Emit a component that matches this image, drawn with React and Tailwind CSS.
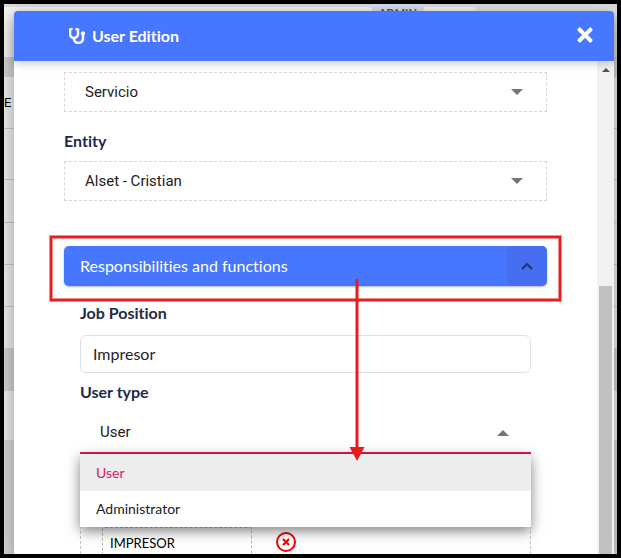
import React, { useState } from 'react';
import { FaStethoscope, FaTimes } from 'react-icons/fa';

const userTypes = ['User', 'Administrator'];

const DashedSelect = ({ id, label, value }) => (
  <div className="relative">
    <select
      id={id}
      aria-label={label}
      defaultValue={value}
      className="block h-10 w-full appearance-none border border-dashed border-[#d6d6d6] bg-white pl-5 pr-12 font-['Roboto',sans-serif] text-[15px] text-[#212121]"
    >
      <option>{value}</option>
    </select>
    <svg viewBox="0 0 12 6" className="pointer-events-none absolute right-6 top-[17px] h-[6px] w-3 fill-[#757575]">
      <path d="M0 0h12L6 6z" />
    </svg>
  </div>
);

// Page that stays visible behind the modal
const PageBackground = () => (
  <div className="absolute inset-0 flex flex-col bg-[#dadada]">
    <div className="mt-[3px] flex h-[50px] shrink-0 bg-[#e0e0e0]">
      <div className="w-[60%] rounded-tr bg-[#f2f2f2]" />
      <div className="-mt-[3px] h-8 w-[52px] rounded bg-[#d5dcec] text-center font-['Lato',sans-serif] text-[11px] font-bold leading-[18px] text-[#4c5568]">
        ADMIN
      </div>
      <div className="w-[52px] rounded-tr bg-[#f2f2f2]" />
    </div>
    <div className="h-5 shrink-0 bg-[#d0d0d0]" />
    <div className="h-[52px] shrink-0 border-b border-[#c8c8c8] bg-[#ededed] pt-4 font-['Roboto',sans-serif] text-[13px] leading-5 text-black">E</div>
    <div className="h-[51px] shrink-0 border-b border-[#c8c8c8] bg-[#ededed]" />
    <div className="h-[43px] shrink-0 border-b border-[#c8c8c8] bg-[#ededed]" />
    <div className="h-[42px] shrink-0 border-b border-[#c8c8c8] bg-[#ededed]" />
    <div className="h-[42px] shrink-0 border-b border-[#c8c8c8] bg-[#ededed]" />
    <div className="h-[41px] shrink-0 bg-[#ededed]" />
    <div className="h-[43px] shrink-0 bg-[#d0d0d0]" />
    <div className="h-[49px] shrink-0 bg-[#ededed]" />
    <div className="grow bg-[#d6d6d6]" />
  </div>
);

const Scrollbar = () => (
  <div className="flex w-[17px] shrink-0 flex-col items-center bg-[#f1f1f1]">
    <svg viewBox="0 0 8 4" className="mt-[7px] h-1 w-2 fill-[#505050]">
      <path d="M4 0l4 4H0z" />
    </svg>
    <div className="mt-[214px] w-[13px] grow bg-[#c1c1c1]" />
  </div>
);

const App = () => {
  const [userType, setUserType] = useState('User');
  const [jobPosition, setJobPosition] = useState('Impresor');

  return (
    <div className="relative flex h-screen overflow-hidden border-4 border-black font-['Lato',sans-serif] [font-variant-ligatures:none]">
      <PageBackground />

      <div className="relative ml-[10px] mr-[3px] mt-[7px] flex min-w-0 grow flex-col rounded-t-[4px] bg-white shadow-[0_8px_20px_rgba(0,0,0,0.35)]">
        <header className="relative z-10 flex h-[50px] shrink-0 items-center rounded-t-[4px] bg-[#4776ff] pl-[55px] pr-5 text-white shadow-[0_3px_8px_rgba(0,0,0,0.2)]">
          <FaStethoscope className="size-4 stroke-white stroke-[16px]" />
          <h1 className="ml-[7px] grow text-base font-bold">User Edition</h1>
          <button type="button" aria-label="Close" className="-mr-0.5 -mt-0.5">
            <FaTimes className="size-[22px]" />
          </button>
        </header>

        <div className="flex min-h-0 grow">
          <div className="min-w-0 grow overflow-hidden px-[50px] pt-[11px]">
            <DashedSelect id="service" label="Service" value="Servicio" />

            <label htmlFor="entity" className="mb-2 mt-[17px] block text-base font-bold leading-6 text-[#1e2a4a]">
              Entity
            </label>
            <DashedSelect id="entity" value="Alset - Cristian" />

            {/* Accordion */}
            <div className="relative mt-[45px]">
              <button
                type="button"
                aria-expanded="true"
                className="flex h-10 w-full items-center overflow-hidden rounded-[5px] bg-[#4776ff] pl-4 text-base text-white shadow-[0_1px_2px_rgba(0,0,0,0.3)]"
              >
                <span className="grow text-left">Responsibilities and functions</span>
                <span className="flex h-full w-10 items-center justify-center rounded-[5px] bg-[#456ff0]">
                  <svg viewBox="0 0 12 7" className="h-[7px] w-3 fill-none stroke-[#26345f] stroke-2">
                    <path d="M1 6l5-5 5 5" />
                  </svg>
                </span>
              </button>
              {/* Highlight and arrow */}
              <div className="pointer-events-none absolute -bottom-[15px] -left-[14px] -right-[14px] -top-[10px] border-2 border-[#e81c1c] shadow-[0_0_0_1px_rgba(232,28,28,0.5),inset_0_0_0_1px_rgba(232,28,28,0.5)]" />
              <svg viewBox="0 0 16 182" className="pointer-events-none absolute left-[59%] top-[33px] z-30 h-[182px] w-4 fill-[#e81c1c]">
                <path d="M6.5 0h3v168h6L8 182 .5 168h6z" />
              </svg>
            </div>

            <div className="px-4">
              <label htmlFor="job" className="mb-[10px] mt-[15px] block text-base font-bold leading-6 text-[#1e2a4a]">
                Job Position
              </label>
              <input
                id="job"
                value={jobPosition}
                onChange={(e) => setJobPosition(e.target.value)}
                className="block h-[38px] w-full rounded-md border border-[#dfe0e6] px-3 pb-0.5 text-base text-[#212529]"
              />

              <label htmlFor="user-type" className="mb-2 mt-[7px] block text-base font-bold leading-6 text-[#1e2a4a]">
                User type
              </label>
              <div className="relative">
                <select
                  id="user-type"
                  value={userType}
                  onChange={(e) => setUserType(e.target.value)}
                  className="block h-[42px] w-full appearance-none border-b-2 border-[#d81b60] bg-white pl-5 font-['Roboto',sans-serif] text-[15px] text-[#212121]"
                >
                  {userTypes.map((type) => (
                    <option key={type}>{type}</option>
                  ))}
                </select>
                <svg viewBox="0 0 12 6" className="pointer-events-none absolute right-[22px] top-[18px] h-[6px] w-3 fill-[#757575]">
                  <path d="M6 0l6 6H0z" />
                </svg>
                <div className="absolute left-0 right-0 top-full z-20 bg-white shadow-[0_4px_12px_rgba(0,0,0,0.5)]">
                  {userTypes.map((type) => (
                    <button
                      key={type}
                      type="button"
                      onClick={() => setUserType(type)}
                      className={`block w-full px-4 text-left text-sm ${
                        type === userType ? 'h-[37px] bg-[#ededed] text-[#d81b60]' : 'h-9 bg-white text-[#212121]'
                      }`}
                    >
                      {type}
                    </button>
                  ))}
                </div>
              </div>

              {/* Assigned functions */}
              <div className="mt-9 flex items-start border border-dashed border-[#c4c4c4] pb-10 pl-[21px] pt-9">
                <input
                  aria-label="Function"
                  defaultValue="IMPRESOR"
                  className="h-8 w-[150px] rounded-[3px] border border-dashed border-[#b8b8b8] px-[7px] text-[13px] text-black"
                />
                <button type="button" aria-label="Remove" className="ml-6 mt-[5px]">
                  <svg viewBox="0 0 20 20" className="size-5 fill-none stroke-[#f00000] stroke-2">
                    <circle cx="10" cy="10" r="9" />
                    <path d="M7 7l6 6M13 7l-6 6" />
                  </svg>
                </button>
              </div>
            </div>
          </div>
          <Scrollbar />
        </div>
      </div>
    </div>
  );
};

export default App;
